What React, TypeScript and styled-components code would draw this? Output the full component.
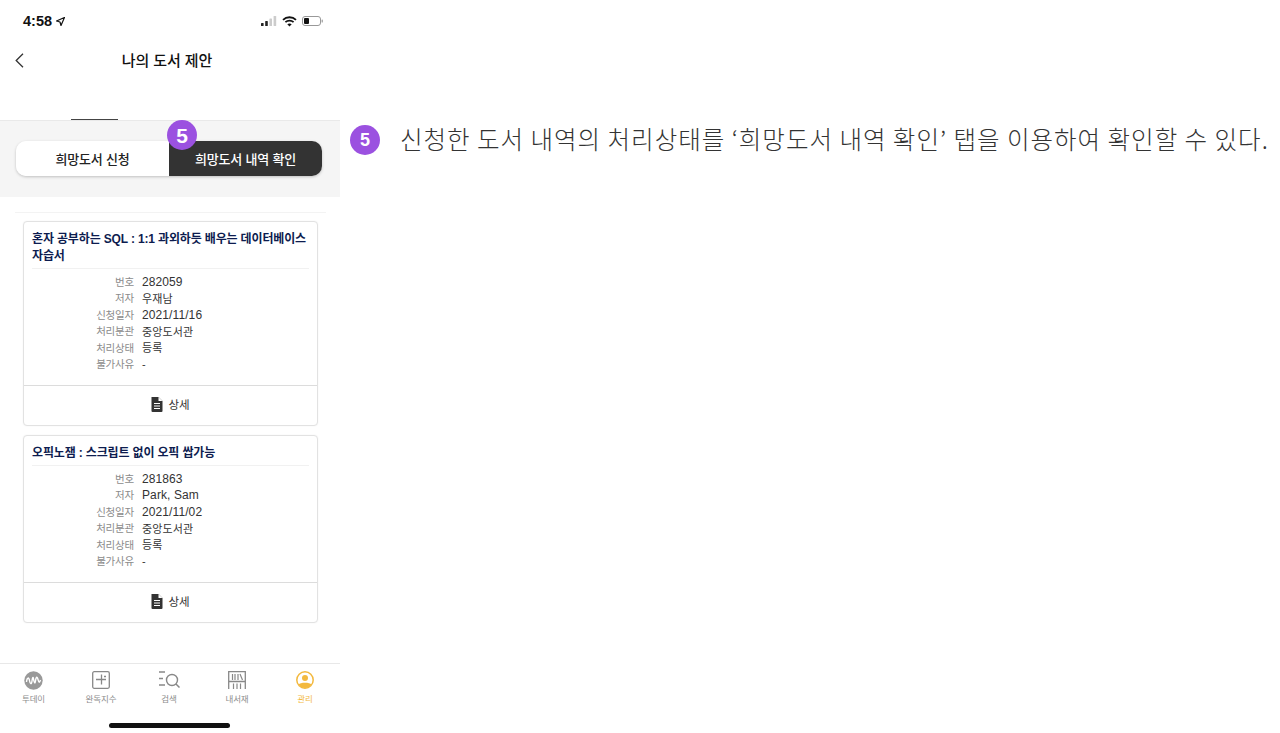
import React from 'react';
import styled, { createGlobalStyle } from 'styled-components';

const GlobalStyle = createGlobalStyle`
  html, body { margin: 0; padding: 0; background: #fff; }
  body { font-family: "Liberation Sans", "Noto Sans CJK KR", sans-serif; color: #222; }
  * { box-sizing: border-box; }
`;

const Page = styled.div`
  display: flex;
  width: 1280px;
  height: 733px;
  overflow: hidden;
`;

const Phone = styled.div`
  width: 340px;
  height: 733px;
  flex: none;
  display: flex;
  flex-direction: column;
`;

const StatusBar = styled.div`
  height: 42px;
  padding: 13px 17px 0 23px;
  display: flex;
  justify-content: space-between;
  align-items: flex-start;
`;

const Time = styled.div`
  display: flex;
  align-items: center;
  gap: 4px;
  height: 16px;
  font: 700 14.5px/16px "Liberation Sans", sans-serif;
  color: #111;
`;

const StatusIcons = styled.div`
  display: flex;
  align-items: center;
  gap: 5px;
  height: 16px;
`;

const NavBar = styled.div`
  height: 36px;
  padding-left: 15px;
  display: grid;
  grid-template-columns: 14px 1fr 35px;
  align-items: center;
`;

const NavTitle = styled.div`
  padding-bottom: 2px;
  text-align: center;
  font-size: 15px;
  font-weight: 500;
  letter-spacing: -0.1px;
  color: #111;
`;

const TabStrip = styled.div`
  height: 42px;
  padding-left: 71px;
  display: flex;
  align-items: flex-end;
`;

const TabMark = styled.div`
  width: 47px;
  height: 1px;
  background: #444;
`;

const SegmentArea = styled.div`
  height: 77px;
  background: #f5f5f5;
  border-top: 1px solid #e9e9e9;
  padding: 20px 18px 0 16px;
`;

const Segment = styled.div`
  position: relative;
  display: grid;
  grid-template-columns: 153px 1fr;
  height: 35px;
  border-radius: 10px;
  box-shadow: 0 1px 3px rgba(0, 0, 0, 0.22);
`;

const SegmentButton = styled.div<{ $active?: boolean }>`
  display: flex;
  align-items: center;
  justify-content: center;
  padding-bottom: 1px;
  font-size: 13px;
  font-weight: 500;
  letter-spacing: -0.2px;
  color: ${p => (p.$active ? '#fff' : '#222')};
  background: ${p => (p.$active ? '#333' : '#fff')};
  border-radius: ${p => (p.$active ? '0 10px 10px 0' : '10px 0 0 10px')};
`;

const Badge = styled.div<{ $large?: boolean }>`
  width: 30px;
  height: 30px;
  flex: none;
  border-radius: 50%;
  background: #9b51e0;
  color: #fff;
  display: flex;
  align-items: center;
  justify-content: center;
  font: 700 ${p => (p.$large ? '18px' : '21px')}/1 "Liberation Sans", sans-serif;
`;

const SegmentBadge = styled(Badge)`
  position: absolute;
  left: 151px;
  top: -21px;
`;

const CardList = styled.div`
  flex: 1;
  padding: 15px 22px 0 23px;
  display: flex;
  flex-direction: column;
  gap: 8px;
  &::before {
    content: "";
    display: block;
    height: 1px;
    background: #f3f3f3;
    margin: 0 -8px;
  }
`;

const Card = styled.div`
  border: 1px solid #e2e2e2;
  border-radius: 4px;
  background: #fff;
  box-shadow: 0 0 2px rgba(0, 0, 0, 0.06);
  & + & {
    margin-top: 1px;
  }
`;

const CardTitle = styled.div`
  margin: 0 8px;
  padding: 9px 0 3px;
  border-bottom: 1px solid #f1f1f1;
  color: #0d1c4f;
  font-size: 12px;
  font-weight: 700;
  line-height: 17px;
  letter-spacing: -0.15px;
`;

const Rows = styled.div`
  padding: 4px 0 13px;
`;

const Row = styled.div`
  display: grid;
  grid-template-columns: 110px 1fr;
  column-gap: 8px;
  height: 16.5px;
  align-items: center;
`;

const Label = styled.div`
  text-align: right;
  color: #8b8b8b;
  font-size: 10.5px;
  letter-spacing: -0.2px;
`;

const Value = styled.div<{ $latin?: boolean }>`
  color: #333;
  padding-top: ${p => (p.$latin ? '1px' : '0')};
  font-size: ${p => (p.$latin ? '12px' : '11px')};
  letter-spacing: 0.1px;
`;

const CardFooter = styled.div`
  height: 40px;
  padding-bottom: 3px;
  border-top: 1px solid #dcdcdc;
  display: flex;
  align-items: center;
  justify-content: center;
  gap: 5px;
  font-size: 11.5px;
  color: #333;
`;

const TabBar = styled.div`
  height: 60px;
  flex: none;
  border-top: 1px solid #e8e8e8;
  display: grid;
  grid-template-columns: 67px repeat(4, 68px);
`;

const TabItem = styled.div<{ $on?: boolean }>`
  display: flex;
  flex-direction: column;
  align-items: center;
  padding-top: 6px;
  font-size: 8.5px;
  letter-spacing: -0.1px;
  color: ${p => (p.$on ? '#f3b93f' : '#8c8c8c')};
`;

const TabIcon = styled.div`
  width: 22px;
  height: 20px;
  margin-bottom: 2px;
  display: flex;
  align-items: center;
  justify-content: center;
`;

const HomeIndicator = styled.div`
  height: 5px;
  width: 121px;
  margin-left: 109px;
  margin-bottom: 5px;
  border-radius: 3px;
  background: #111;
`;

const Side = styled.div`
  flex: 1;
  padding: 125px 0 0 10px;
  display: flex;
  align-items: flex-start;
  gap: 20px;
`;

const Note = styled.div`
  height: 30px;
  white-space: nowrap;
  font-family: "Noto Sans CJK KR", sans-serif;
  font-size: 24.5px;
  font-weight: 300;
  line-height: 28px;
  letter-spacing: 1px;
  color: #333;
`;

const StatusSvg = styled.svg`
  display: block;
`;

const DocIcon = () => (
  <svg width="12" height="15" viewBox="0 0 12 15">
    <path d="M0.5 0H7.5L11.5 4V14a1 1 0 0 1-1 1H1.5a1 1 0 0 1-1-1Z" fill="#333" />
    <path d="M7.5 0V4H11.5Z" fill="#fff" />
    <path d="M3 6.5H9M3 9H9M3 11.5H9" stroke="#fff" strokeWidth="1" />
  </svg>
);

const books = [
  {
    title: '혼자 공부하는 SQL : 1:1 과외하듯 배우는 데이터베이스 자습서',
    no: '282059',
    author: '우재남',
    authorLatin: false,
    date: '2021/11/16',
  },
  {
    title: '오픽노잼 : 스크립트 없이 오픽 쌉가능',
    no: '281863',
    author: 'Park, Sam',
    authorLatin: true,
    date: '2021/11/02',
  },
];

const App = () => {
  return (
    <Page>
      <GlobalStyle />
      <Phone>
        <StatusBar>
          <Time>
            4:58
            <svg width="9" height="9" viewBox="0 0 9 9">
              <path d="M8.5 0.5L0.5 4L4 5L5 8.5Z" fill="none" stroke="#111" strokeWidth="1.2" strokeLinejoin="round" />
            </svg>
          </Time>
          <StatusIcons>
            <StatusSvg width="16" height="10" viewBox="0 0 16 10">
              <rect x="0" y="7" width="2.6" height="3" rx="0.6" fill="#222" />
              <rect x="4.2" y="5" width="2.6" height="5" rx="0.6" fill="#222" />
              <rect x="8.4" y="2.5" width="2.6" height="7.5" rx="0.6" fill="#ccc" />
              <rect x="12.6" y="0" width="2.6" height="10" rx="0.6" fill="#ccc" />
            </StatusSvg>
            <StatusSvg width="15" height="11" viewBox="0 0 15 11">
              <path d="M1 3.8C4.6 0.4 10.4 0.4 14 3.8" fill="none" stroke="#111" strokeWidth="1.8" />
              <path d="M3.4 6.2C5.7 4.1 9.3 4.1 11.6 6.2" fill="none" stroke="#111" strokeWidth="1.8" />
              <path d="M7.5 10.6L5.3 8.3C6.5 7.3 8.5 7.3 9.7 8.3Z" fill="#111" />
            </StatusSvg>
            <StatusSvg width="21" height="10" viewBox="0 0 21 10">
              <rect x="0.5" y="0.5" width="18" height="9" rx="2.5" fill="none" stroke="#999" />
              <rect x="2" y="2" width="5" height="6" rx="1" fill="#111" />
              <rect x="19.6" y="3.5" width="1.2" height="3" rx="0.6" fill="#999" />
            </StatusSvg>
          </StatusIcons>
        </StatusBar>
        <NavBar>
          <svg width="9" height="15" viewBox="0 0 9 15">
            <path d="M8 0.8L1.2 7.5L8 14.2" fill="none" stroke="#333" strokeWidth="1.3" />
          </svg>
          <NavTitle>나의 도서 제안</NavTitle>
          <span />
        </NavBar>
        <TabStrip>
          <TabMark />
        </TabStrip>
        <SegmentArea>
          <Segment>
            <SegmentButton>희망도서 신청</SegmentButton>
            <SegmentButton $active>희망도서 내역 확인</SegmentButton>
            <SegmentBadge>5</SegmentBadge>
          </Segment>
        </SegmentArea>
        <CardList>
          {books.map(b => (
            <Card key={b.no}>
              <CardTitle>{b.title}</CardTitle>
              <Rows>
                <Row><Label>번호</Label><Value $latin>{b.no}</Value></Row>
                <Row><Label>저자</Label><Value $latin={b.authorLatin}>{b.author}</Value></Row>
                <Row><Label>신청일자</Label><Value $latin>{b.date}</Value></Row>
                <Row><Label>처리분관</Label><Value>중앙도서관</Value></Row>
                <Row><Label>처리상태</Label><Value>등록</Value></Row>
                <Row><Label>불가사유</Label><Value>-</Value></Row>
              </Rows>
              <CardFooter>
                <DocIcon />
                상세
              </CardFooter>
            </Card>
          ))}
        </CardList>
        <TabBar>
          <TabItem>
            <TabIcon>
              <svg width="19" height="19" viewBox="0 0 19 19">
                <circle cx="9.5" cy="9.5" r="9.2" fill="#999" />
                <path d="M2.5 11C3 6 5 6 5.5 9.5S7.5 14 8 10S9 5.5 9.5 8S11 14 11.5 10S13 5 14 8.5S15.5 12 16.5 9" fill="none" stroke="#fff" strokeWidth="1.4" />
              </svg>
            </TabIcon>
            투데이
          </TabItem>
          <TabItem>
            <TabIcon>
              <svg width="18" height="18" viewBox="0 0 18 18">
                <rect x="0.7" y="0.7" width="16.6" height="16.6" rx="1.5" fill="none" stroke="#888" strokeWidth="1.3" />
                <path d="M4 8.5H14M9.5 3.5V13.5M12 5.5H14" fill="none" stroke="#888" strokeWidth="1.3" />
              </svg>
            </TabIcon>
            완독지수
          </TabItem>
          <TabItem>
            <TabIcon>
              <svg width="21" height="18" viewBox="0 0 21 18">
                <path d="M0 1H6M0 7.5H4M0 14H6" fill="none" stroke="#888" strokeWidth="1.3" />
                <circle cx="13" cy="9" r="5.5" fill="none" stroke="#888" strokeWidth="1.4" />
                <path d="M17 13L20.5 16.5" fill="none" stroke="#888" strokeWidth="1.5" />
              </svg>
            </TabIcon>
            검색
          </TabItem>
          <TabItem>
            <TabIcon>
              <svg width="18" height="18" viewBox="0 0 18 18">
                <path d="M0.7 18V0.7H17.3V18M0.7 10.5H17.3" fill="none" stroke="#888" strokeWidth="1.3" />
                <path d="M4.5 3V9M7 3V9M10 3V9M12 3L14.5 9M5.5 12.5V18M9 12.5V18M12.5 12.5V18" fill="none" stroke="#888" strokeWidth="1.2" />
              </svg>
            </TabIcon>
            내서재
          </TabItem>
          <TabItem $on>
            <TabIcon>
              <svg width="18" height="18" viewBox="0 0 18 18">
                <circle cx="9" cy="9" r="8.2" fill="#fff" stroke="#f3b93f" strokeWidth="1.5" />
                <circle cx="9" cy="7" r="3" fill="#f3b93f" />
                <path d="M2.6 13.5C4 11 14 11 15.4 13.5C13.8 16 11.5 17 9 17S4.2 16 2.6 13.5Z" fill="#f3b93f" />
              </svg>
            </TabIcon>
            관리
          </TabItem>
        </TabBar>
        <HomeIndicator />
      </Phone>
      <Side>
        <Badge $large>5</Badge>
        <Note>신청한 도서 내역의 처리상태를 ‘희망도서 내역 확인’ 탭을 이용하여 확인할 수 있다.</Note>
      </Side>
    </Page>
  );
};

export default App;
